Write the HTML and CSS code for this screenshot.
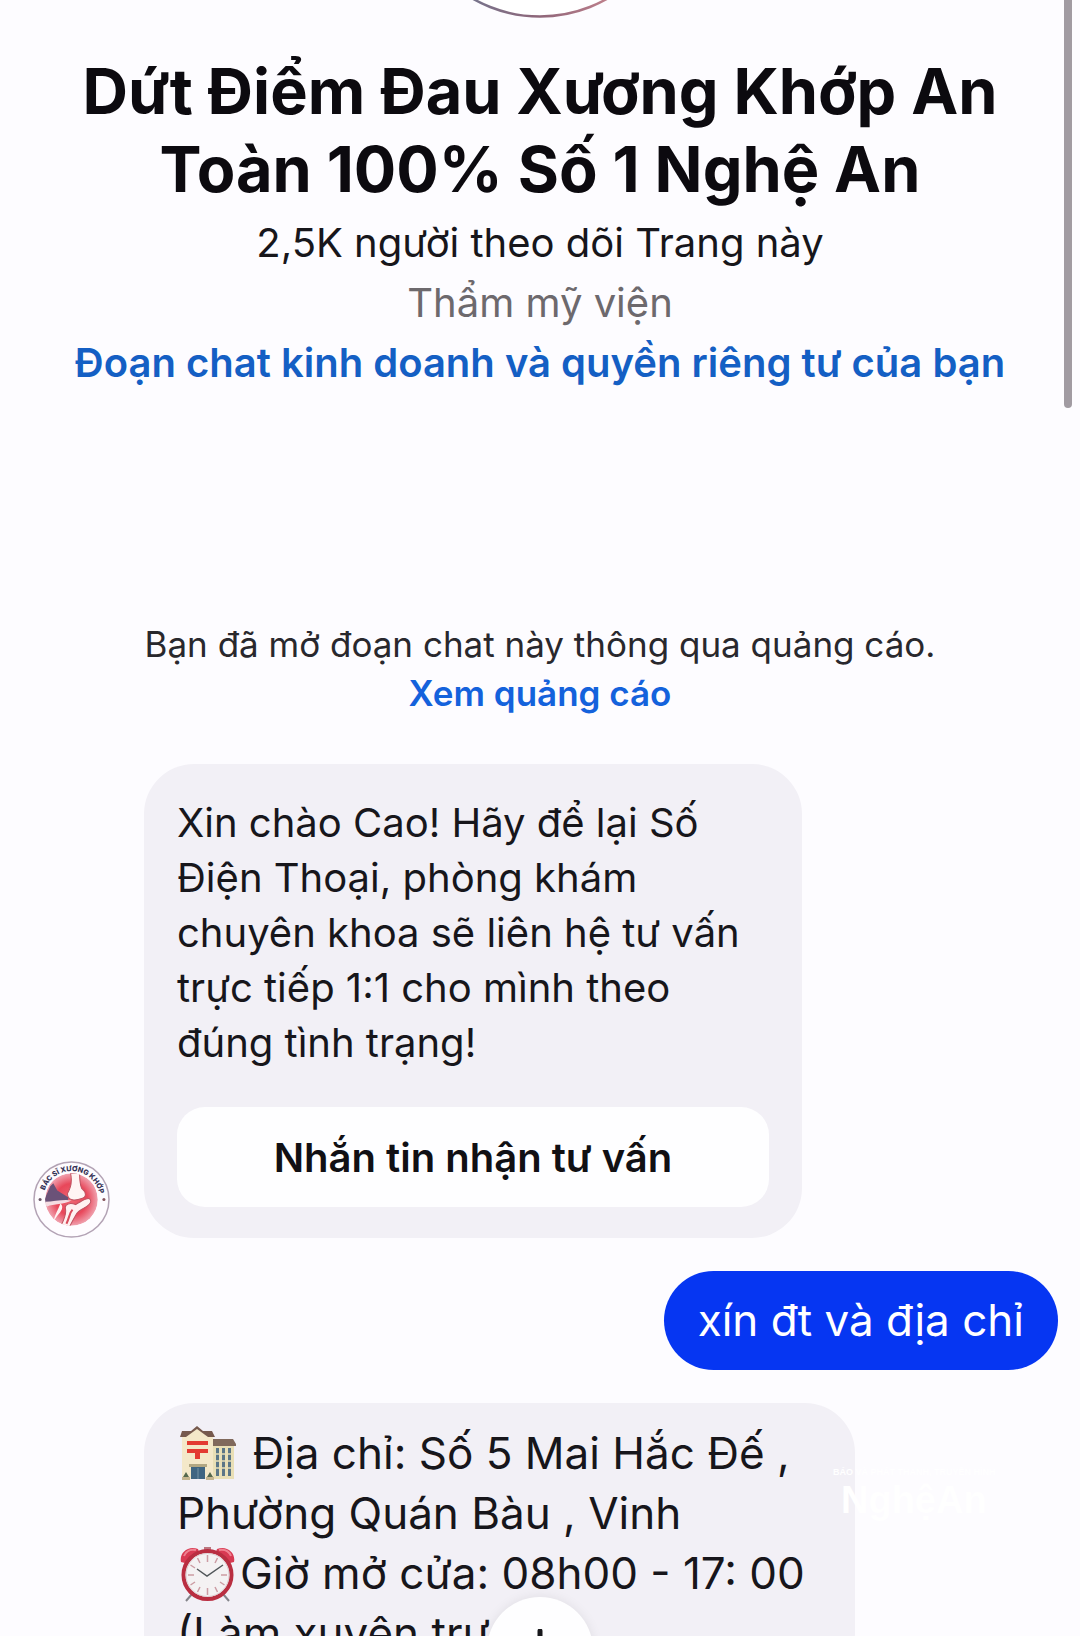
FILE: index.html
```html
<!DOCTYPE html>
<html lang="vi">
<head>
    <meta charset="UTF-8">
    <meta name="viewport" content="width=device-width, initial-scale=1.0">
    <title>Dứt Điểm Đau Xương Khớp An Toàn 100% Số 1 Nghệ An</title>
    <link rel="stylesheet" href="styles.css">
</head>
<body>
    <div class="chat">
        <div class="scrollbar"></div>

        <header class="page-info">
            <svg class="cover-avatar" viewBox="0 0 274 274" aria-hidden="true">
                <defs>
                    <linearGradient id="ring">
                        <stop offset="0.25" stop-color="#77748c"/>
                        <stop offset="0.5" stop-color="#8f6679"/>
                        <stop offset="0.75" stop-color="#bd7f8b"/>
                    </linearGradient>
                </defs>
                <circle cx="137" cy="137" r="135.5" fill="#fff" stroke="url(#ring)" stroke-width="2.5"/>
            </svg>
            <h1>Dứt Điểm Đau Xương Khớp An<br>Toàn 100% Số 1 Nghệ An</h1>
            <p>2,5K người theo dõi Trang này</p>
            <p class="category">Thẩm mỹ viện</p>
            <a href="#privacy">Đoạn chat kinh doanh và quyền riêng tư của bạn</a>
        </header>

        <div class="ad-notice">
            <p>Bạn đã mở đoạn chat này thông qua quảng cáo.</p>
            <a href="#ad">Xem quảng cáo</a>
        </div>

        <main class="messages">
            <div class="row">
                <svg class="avatar" viewBox="0 0 76 76" role="img" aria-label="Bác sĩ xương khớp">
                    <defs>
                        <radialGradient id="red">
                            <stop offset="0" stop-color="#ee6672"/>
                            <stop offset="0.6" stop-color="#e8475a"/>
                            <stop offset="1" stop-color="#f0a3b0"/>
                        </radialGradient>
                        <clipPath id="disc"><circle cx="38" cy="38" r="26"/></clipPath>
                        <path id="arc" d="M10 38 A28 28 0 0 1 66 38"/>
                    </defs>
                    <circle cx="38" cy="38" r="37" fill="#fefcff" stroke="#b3a3b5" stroke-width="1.500"/>
                    <g clip-path="url(#disc)">
                        <circle cx="38" cy="38" r="26" fill="url(#red)"/>
                        <path d="M10 41 L17 25 L20 22 L24 29 L35 36 L34 40 Z" fill="#6b5278"/>
                        <path d="M8 40 C18 41 30 37 38 39 C31 43 20 42 14 45 Z" fill="#f5dce2"/>
                        <path d="M37 12 C39 20 37 27 34 32 C34 40 43 39 48 37 C53 36 53 31 48 27 C46 22 46 17 46 12 Z" fill="#fff5f4" stroke="#bf5260"/>
                        <path d="M28 63 C31 57 33 51 32 47 C31 42 37 41 42 43 C47 40 57 33 57 40 C57 45 46 47 43 52 C40 57 38 61 36 65 Z" fill="#fff1f1" stroke="#bf5260"/>
                        <path d="M27 42 C31 45 28 50 24 54 L20 60 C22 52 25 48 27 42 Z" fill="#fff1f1"/>
                        <path d="M33 62 C36 56 36 51 39 48" fill="none" stroke="#d94b5b" stroke-width="2"/>
                    </g>
                    <circle cx="7" cy="38" r="1.500" fill="#675463"/>
                    <circle cx="70" cy="38" r="1.500" fill="#86545c"/>
                    <text class="avatar-text"><textPath href="#arc" startOffset="52%">BÁC SĨ XƯƠNG KHỚP</textPath></text>
                </svg>
                <div class="bubble card">
                    <p>Xin chào Cao! Hãy để lại Số<br>Điện Thoại, phòng khám<br>chuyên khoa sẽ liên hệ tư vấn<br>trực tiếp 1:1 cho mình theo<br>đúng tình trạng!</p>
                    <button class="btn" type="button">Nhắn tin nhận tư vấn</button>
                </div>
            </div>

            <div class="row user-row">
                <div class="bubble user-bubble">xín đt và địa chỉ</div>
            </div>

            <div class="row">
                <div class="bubble address">
                    <svg class="emoji" viewBox="0 0 56 56" role="img" aria-label="Bưu điện">
                        <path d="M32 18 H54 V53 H32 Z" fill="#e9dfb6"/>
                        <path d="M31 18 L33 13 H53 L56 18 V20 H31 Z" fill="#80695c"/>
                        <path d="M2 11 L17 2 L33 11 V53 H2 Z" fill="#f4e8c9"/>
                        <path d="M0 11 L2 5 L11 5 L17 0 L23 5 L32 5 L35 11 H28 L17 3 L6 11 Z" fill="#76594d"/>
                        <path d="M7 15 H28 V19 H7 Z M7 23 H28 V27 H20 V33 H15 V27 H7 Z" fill="#e33a32"/>
                        <path d="M36 22 H39 V50 H36 Z M42 22 H45 V50 H42 Z M48 22 H51 V50 H48 Z" fill="#5b7687"/>
                        <path d="M34 28 H53 M34 35 H53 M34 42 H53" stroke="#e9dfb6" stroke-width="1.500"/>
                        <path d="M9 38 H27 V41 H9 Z" fill="#b2a783"/>
                        <path d="M11 41 H25 V53 H11 Z" fill="#3f6582"/>
                        <path d="M18 42 V53" stroke="#7493a4"/>
                        <path d="M3 51 L6 46 L9 51 Z M27 51 L30 46 L33 51 Z" fill="#56694d"/>
                        <path d="M2 51 H10 V54 H2 Z M26 51 H34 V54 H26 Z" fill="#c5b58f"/>
                    </svg>
                    Địa chỉ: Số 5 Mai Hắc Đế ,<br>
                    Phường Quán Bàu , Vinh<br>
                    <svg class="emoji" viewBox="0 0 56 56" role="img" aria-label="Đồng hồ báo thức">
                        <path d="M12 48 L6 55 M43 48 L49 55" stroke="#83848a" stroke-width="2"/>
                        <path d="M24 1 H31 V6 H24 Z" fill="#bd7680"/>
                        <path d="M1 16 C-1 7 8 -1 18 3 L19 6 L5 17 Z M54 16 C56 7 47 -1 37 3 L36 6 L50 17 Z" fill="#d83a53"/>
                        <path d="M4 10 C6 5 11 3 16 4 M39 4 C45 3 49 5 51 10" fill="none" stroke="#ef8291" stroke-width="2"/>
                        <circle cx="27.500" cy="29" r="24" fill="#f4f2f3" stroke="#b92e41" stroke-width="4"/>
                        <circle cx="27.500" cy="29" r="21.500" fill="none" stroke="#ddcdd1"/>
                        <path d="M27.500 9 V16 M27.500 42 V49 M8 29 H14 M41 29 H47 M17.500 12 L20 17 M37.500 12 L35 17 M10.500 19 L15 22 M10.500 39 L15 36 M17.500 46 L20 41 M37.500 46 L35 41 M44.500 39 L40 36" stroke="#cc9da4" stroke-width="1.500"/>
                        <path d="M17 23 L27 30 L43 19" fill="none" stroke="#51575a" stroke-width="1.500"/>
                    </svg>Giờ mở cửa: 08h00 - 17: 00<br>
                    (Làm xuyên trư
                </div>
            </div>
        </main>

        <div class="watermark">
            <small>BÁO VÀ PHÁT THANH, TRUYỀN HÌNH</small>
            <strong>NghệAn</strong>
        </div>

        <button class="scroll-down" type="button" aria-label="Cuộn xuống">
            <svg viewBox="0 0 42 42" aria-hidden="true">
                <path d="M21 2 V39 M6 24 L21 39 L36 24" fill="none" stroke="#17171b" stroke-width="5" stroke-linecap="round" stroke-linejoin="round"/>
            </svg>
        </button>
    </div>
</body>
</html>
```

FILE: styles.css
```css
* { box-sizing: border-box; }
body { margin: 0; background: #fdfcff; color: #17161b; font-family: Inter, "Noto Sans", sans-serif; font-size: 40px; }
h1, p { margin: 0; }
a { text-decoration: none; }
.chat { position: relative; height: 100vh; overflow: hidden; }
.scrollbar { position: absolute; top: 0; right: 8px; width: 8px; height: 408px; background: #a19ba2; border-radius: 0 0 4px 4px; }

.page-info { display: flex; flex-direction: column; align-items: center; text-align: center; line-height: 60px; }
.cover-avatar { width: 274px; height: 274px; margin-top: -256px; margin-bottom: 34px; }
.page-info h1 { margin-bottom: 5px; color: #0c0a0f; font-size: 63px; font-weight: 700; line-height: 78px; }
.page-info .category { color: #6d696d; }
.page-info a { color: #145fc4; font-weight: 600; }

.ad-notice { margin-top: 227px; text-align: center; font-size: 35px; line-height: 49px; }
.ad-notice p { color: #29282d; }
.ad-notice a { display: block; color: #1462dc; font-weight: 600; }

.messages { display: flex; flex-direction: column; gap: 33px; margin-top: 46px; padding: 0 22px 0 33px; }
.row { display: flex; align-items: flex-end; gap: 34px; }
.row > .bubble:first-child { margin-left: 111px; }
.avatar { flex: none; width: 77px; height: 77px; }
.avatar-text { font-size: 7px; font-weight: 800; fill: #343155; text-anchor: middle; }
.bubble { background: #f2f0f6; border-radius: 50px; }
.card { width: 658px; padding: 31px 33px; line-height: 55px; }
.btn { display: block; width: 100%; height: 100px; margin-top: 37px; border: none; border-radius: 28px; background: #fefeff; color: #111014; font: inherit; font-weight: 600; cursor: pointer; }
.row.user-row { justify-content: flex-end; }
.row > .user-bubble:first-child { margin-left: 0; padding: 20px 34px; border-radius: 50px; background: #0636f2; color: #fff; font-size: 44px; line-height: 59px; }
.address { width: 711px; padding: 20px 33px; font-size: 44px; line-height: 60px; white-space: nowrap; }
.emoji { width: 56px; height: 56px; margin: 0 4px 0 3px; vertical-align: -13px; }

.watermark { position: absolute; top: 1465px; left: 833px; display: flex; flex-direction: column; color: #fff; font-family: "Liberation Sans", sans-serif; }
.watermark small { font-size: 9px; font-weight: 700; line-height: 14px; }
.watermark strong { padding-left: 8px; font-size: 38px; line-height: 42px; }

.scroll-down { position: absolute; bottom: -67px; left: 50%; display: flex; align-items: center; justify-content: center; width: 106px; height: 106px; margin-left: -53px; padding: 0; border: none; border-radius: 50%; background: #fefeff; box-shadow: 0 0 12px rgba(0,0,0,0.08); cursor: pointer; }
.scroll-down svg { width: 42px; height: 42px; }
```
